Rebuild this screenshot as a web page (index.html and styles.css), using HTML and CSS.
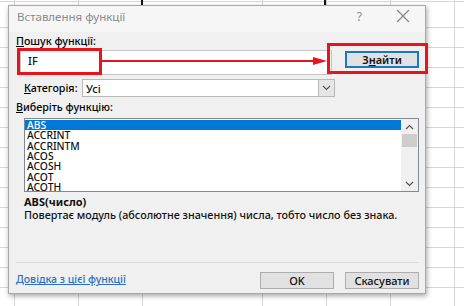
FILE: index.html
```html
<!DOCTYPE html>
<html lang="uk">
<head>
    <meta charset="UTF-8">
    <title>Вставлення функції</title>
    <link rel="stylesheet" href="styles.css">
</head>
<body>
    <div class="dialog">
        <div class="titlebar">
            <span class="title">Вставлення функції</span>
            <span class="help">?</span>
            <svg class="close" width="14" height="14" viewBox="0 0 14 14">
                <path d="M1 1 L13 13 M13 1 L1 13" stroke="#888" stroke-width="1.2" fill="none"/>
            </svg>
        </div>

        <div class="content">
            <div class="label"><u>П</u>ошук функції:</div>
            <div class="search-row">
                <div class="input">IF</div>
                <button class="btn btn-default">З<u>н</u>айти</button>
            </div>

            <div class="category-row">
                <span class="cat-label"><u>К</u>атегорія:</span>
                <div class="select">
                    <span>Усі</span>
                    <span class="drop">
                        <svg width="9" height="6" viewBox="0 0 9 6"><path d="M1 1 L4.5 4.5 L8 1" stroke="#555" stroke-width="1.1" fill="none"/></svg>
                    </span>
                </div>
            </div>

            <div class="label label-list"><u>В</u>иберіть функцію:</div>
            <div class="listbox">
                <ul class="items">
                    <li class="selected">ABS</li>
                    <li>ACCRINT</li>
                    <li>ACCRINTM</li>
                    <li>ACOS</li>
                    <li>ACOSH</li>
                    <li>ACOT</li>
                    <li>ACOTH</li>
                </ul>
                <div class="scrollbar">
                    <svg class="arrow" width="9" height="6" viewBox="0 0 9 6"><path d="M1 5 L4.5 1.5 L8 5" stroke="#555" stroke-width="1.2" fill="none"/></svg>
                    <div class="thumb"></div>
                    <div class="track"></div>
                    <svg class="arrow" width="9" height="6" viewBox="0 0 9 6"><path d="M1 1 L4.5 4.5 L8 1" stroke="#555" stroke-width="1.2" fill="none"/></svg>
                </div>
            </div>

            <div class="desc">
                <div class="desc-name">ABS(число)</div>
                <div class="desc-text">Повертає модуль (абсолютне значення) числа, тобто число без знака.</div>
            </div>

            <div class="footer">
                <a class="help-link" href="#">Довідка з цієї функції</a>
                <div class="buttons">
                    <button class="btn">OK</button>
                    <button class="btn">Скасувати</button>
                </div>
            </div>
        </div>
    </div>

    <!-- red annotations -->
    <div class="mark mark-input"></div>
    <div class="mark mark-button"></div>
    <div class="arrow-line"></div>
    <div class="arrow-head"></div>
</body>
</html>
```

FILE: styles.css
```css
body {
    margin: 0;
    width: 464px;
    height: 306px;
    overflow: hidden;
    position: relative;
    font-family: "Noto Sans", "Open Sans", sans-serif;
    background-color: #fff;
    background-image:
        linear-gradient(#111, #111),
        linear-gradient(#111, #111),
        linear-gradient(#d6d6d6, #d6d6d6),
        linear-gradient(#d6d6d6, #d6d6d6),
        linear-gradient(#d6d6d6, #d6d6d6),
        linear-gradient(#d6d6d6, #d6d6d6),
        linear-gradient(#d6d6d6, #d6d6d6),
        linear-gradient(#d6d6d6, #d6d6d6),
        linear-gradient(#d6d6d6, #d6d6d6),
        repeating-linear-gradient(to bottom, transparent 0 19px, #d6d6d6 19px 20px);
    background-size:
        2px 6px, 2px 6px,
        1px 100%, 1px 100%, 1px 100%, 1px 100%, 1px 100%, 1px 100%, 1px 100%,
        100% 100%;
    background-position:
        141px 0, 324px 0,
        14px 0, 78px 0, 142px 0, 262px 0, 326px 0, 390px 0, 454px 0,
        0 8px;
    background-repeat: no-repeat, no-repeat, no-repeat, no-repeat, no-repeat, no-repeat, no-repeat, no-repeat, no-repeat, repeat-y;
}

.dialog {
    position: absolute;
    left: 8px;
    top: 5px;
    width: 416px;
    height: 287px;
    background-color: #f0f0f0;
    border: 1px solid #a8a8a8;
    box-shadow: 1px 2px 5px rgba(0,0,0,0.35);
    font-size: 11px;
    font-weight: 500;
    color: #111;
}

.titlebar {
    height: 26px;
    display: flex;
    align-items: center;
    padding: 0 0 0 8px;
    background-color: #f6f6f6;
}
.title {
    flex: 1;
    color: #8a8a8a;
    font-size: 11.5px;
    font-weight: 400;
    padding-bottom: 6px;
}
.help {
    color: #8a8a8a;
    font-size: 12px;
    font-weight: 400;
    margin-right: 34px;
    padding-bottom: 6px;
}
.close {
    margin-right: 15px;
    margin-bottom: 6px;
}

.content {
    padding: 2px 6px 0 6px;
}

.label {
    height: 14px;
    line-height: 14px;
    padding-left: 1px;
    font-size: 10.7px;
    color: #000;
}

.search-row {
    display: flex;
    align-items: flex-start;
    margin-top: 2px;
}
.input {
    height: 23px;
    margin-left: 5px;
    background: #fff;
    border: 1px solid #c4c4c4;
    padding-left: 7px;
    line-height: 20px;
    width: 303px;
}
.btn {
    font-family: "Noto Sans", "Open Sans", sans-serif;
    font-size: 11px;
    font-weight: 600;
    color: #111;
    background-color: #e1e1e1;
    border: 1px solid #adadad;
    width: 74px;
    height: 17px;
    padding: 0;
    line-height: 14px;
}
.btn-default {
    border: 2px solid #1a78c8;
    margin-left: 13px;
    margin-top: 1px;
}

.category-row {
    display: flex;
    align-items: center;
    margin-top: 4px;
    height: 18px;
}
.cat-label {
    width: 58px;
    padding-left: 9px;
    font-size: 10.7px;
    color: #000;
}
.select {
    flex: 0 0 251px;
    height: 16px;
    display: flex;
    align-items: center;
    background: #fff;
    border: 1px solid #b8b8b8;
}
.select span:first-child {
    flex: 1;
    padding-left: 3px;
}
.drop {
    width: 15px;
    height: 16px;
    display: flex;
    align-items: center;
    justify-content: center;
    background: #e6e6e6;
    border-left: 1px solid #b8b8b8;
}

.label-list {
    margin-top: 3px;
}

.listbox {
    display: flex;
    margin: 4px 0 0 9px;
    height: 72px;
    border: 1px solid #828790;
    background: #fff;
}
.items {
    flex: 1;
    list-style: none;
    margin: 0;
    padding: 1px 0 0 0;
    font-size: 10.3px;
    line-height: 10.33px;
}
.items li {
    padding-left: 2px;
}
.items li.selected {
    background-color: #0078d7;
    color: #fff;
}
.scrollbar {
    width: 17px;
    display: flex;
    flex-direction: column;
    align-items: center;
    background: #f0f0f0;
}
.scrollbar .arrow {
    margin: 5px 0 4px;
}
.thumb {
    width: 15px;
    height: 13px;
    background: #cdcdcd;
}
.track {
    flex: 1;
}

.desc {
    height: 60px;
    margin: 4px 0 6px 9px;
}
.desc-name {
    font-weight: 700;
    line-height: 12px;
}
.desc-text {
    line-height: 14px;
    font-size: 10.8px;
}

.footer {
    border-top: 1px solid #dcdcdc;
    margin-left: 1px;
    padding-top: 9px;
    display: flex;
    align-items: flex-start;
}
.help-link {
    flex: 1;
    color: #2a6fc2;
    font-size: 10.5px;
    text-decoration: underline;
    line-height: 14px;
}
.buttons {
    display: flex;
    gap: 11px;
}
.buttons .btn {
    width: 74px;
    height: 17px;
    font-weight: 500;
}

.mark {
    position: absolute;
    border: 3px solid #e8141c;
    box-sizing: border-box;
}
.mark-input {
    left: 17px;
    top: 48px;
    width: 85px;
    height: 27px;
}
.mark-button {
    left: 327px;
    top: 43px;
    width: 101px;
    height: 31px;
}
.arrow-line {
    position: absolute;
    left: 101px;
    top: 60px;
    width: 214px;
    height: 2px;
    background: #e8141c;
}
.arrow-head {
    position: absolute;
    left: 313px;
    top: 57px;
    width: 0;
    height: 0;
    border-top: 4px solid transparent;
    border-bottom: 4px solid transparent;
    border-left: 14px solid #e8141c;
}
```
